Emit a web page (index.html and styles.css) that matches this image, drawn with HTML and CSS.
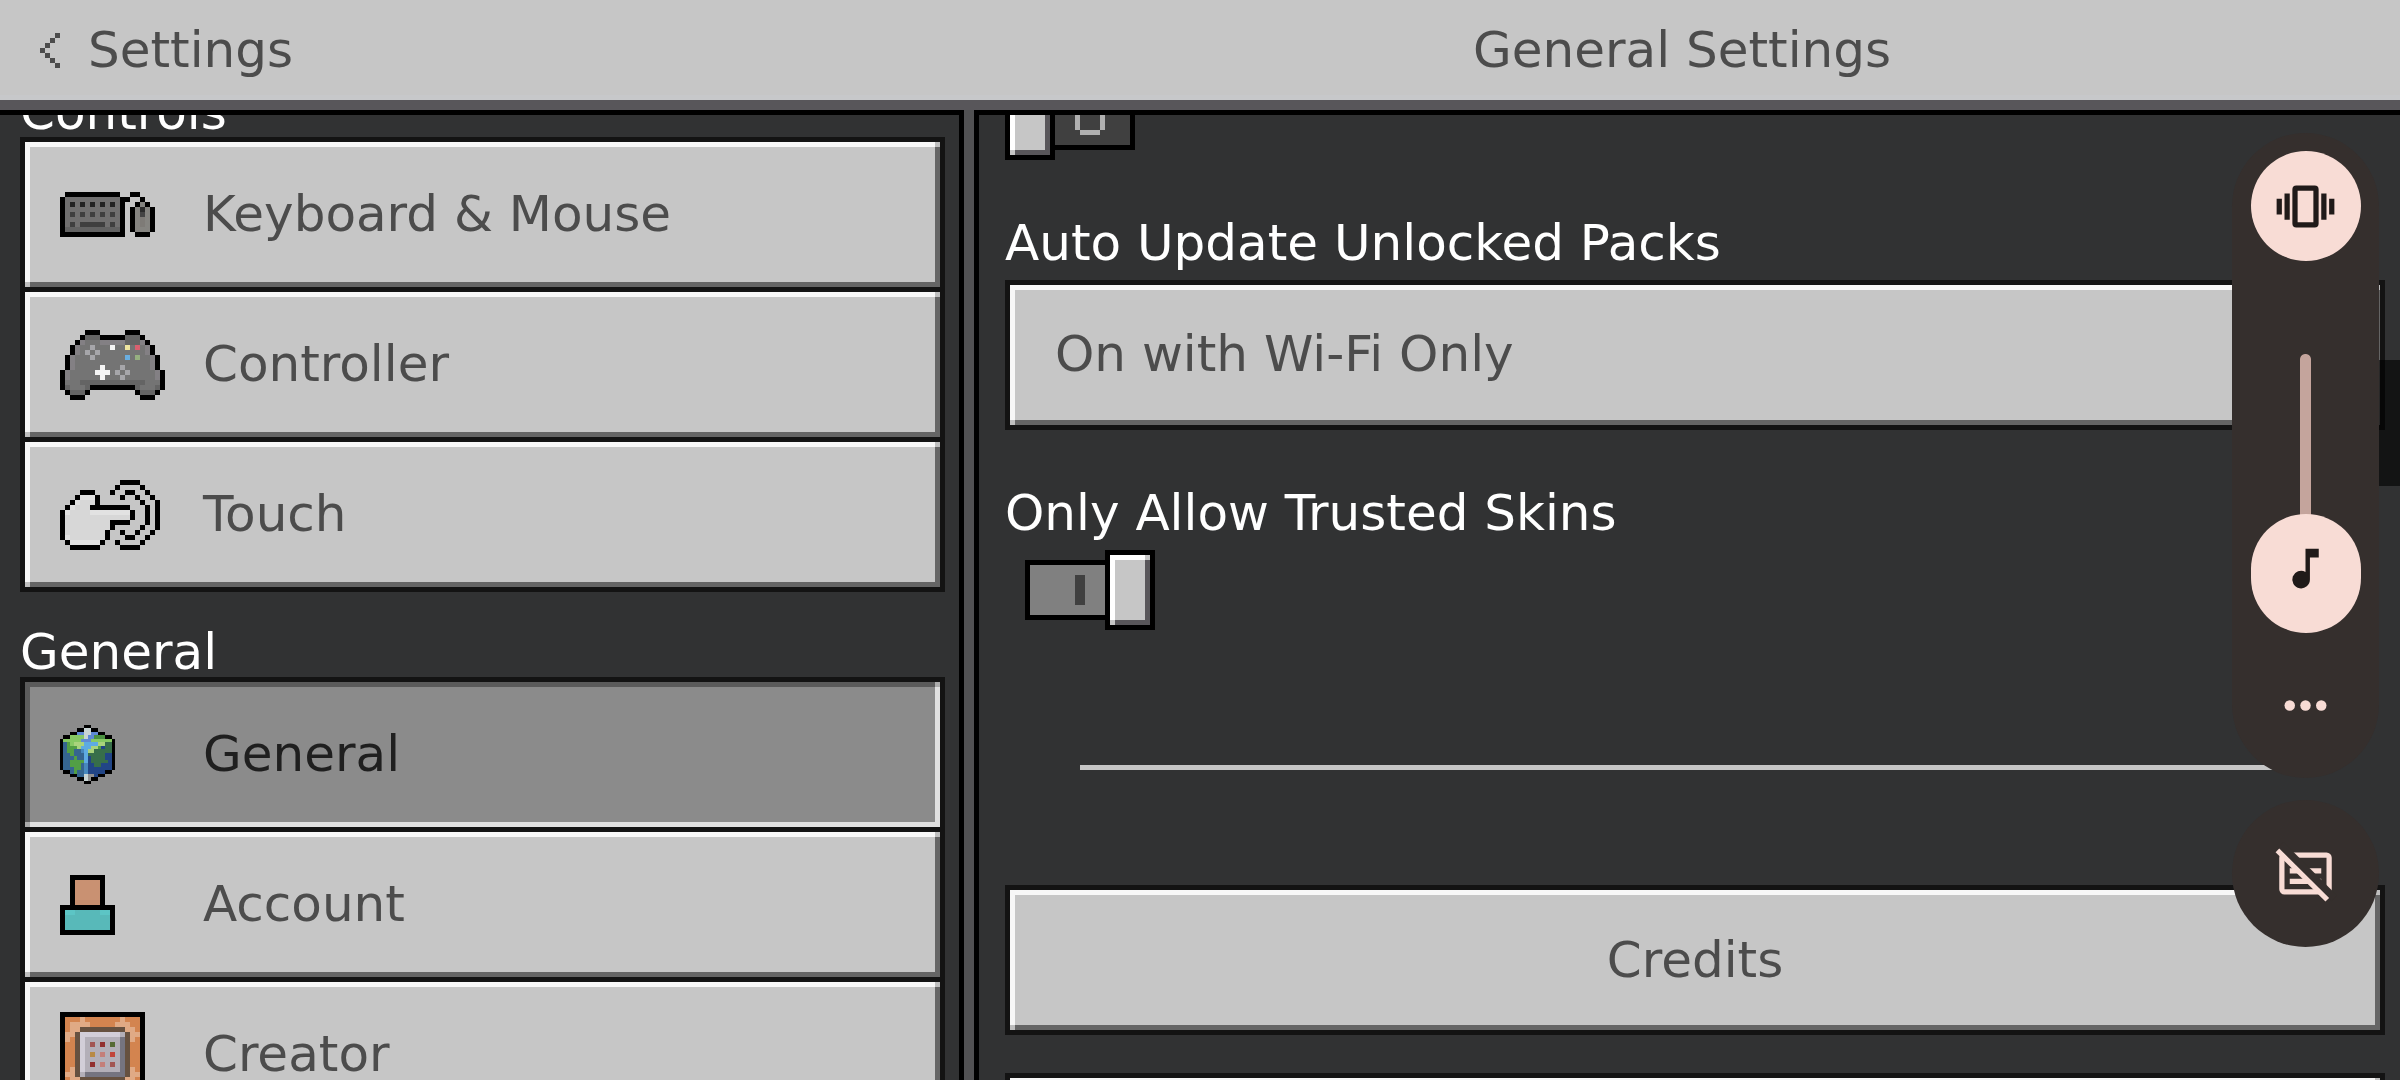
FILE: index.html
```html
<!DOCTYPE html>
<html lang="en">
<head>
<meta charset="utf-8">
<meta name="viewport" content="width=device-width, initial-scale=1">
<title>General Settings</title>
<link rel="stylesheet" href="styles.css">
</head>
<body>
<header class="topbar">
  <button class="back" type="button">
    <svg class="pixel" width="20" height="35" viewBox="0 -0.5 4 7" aria-hidden="true"><path stroke="#4c4c4c" d="M3 0h1M2 1h1M1 2h1M0 3h1M1 4h1M2 5h1M3 6h1"/></svg>
    <span>Settings</span>
  </button>
  <h1 class="title">General Settings</h1>
</header>

<main class="panels">
  <nav class="panel sidebar" aria-label="Settings sections">
    <div class="sections">
      <h2 class="heading">Controls</h2>
      <ul class="menu">
        <li><button class="item bevel" type="button">
          <span class="icon"><svg class="pixel" width="95" height="45" viewBox="0 -0.5 19 9" aria-hidden="true">
            <path stroke="#706f6f" d="M1 1h11M1 2h11M1 3h11M1 4h11M1 5h11M1 6h11"/>
            <path stroke="#626262" d="M1 7h11"/>
            <path stroke="#222" d="M2 2h1M4 2h1M6 2h1M8 2h1M10 2h1"/>
            <path stroke="#3f3f3f" d="M2 4h1M4 4h1M6 4h1M8 4h1M10 4h1M2 6h1M4 6h5M10 6h1"/>
            <path stroke="#858480" d="M16 2h1M15 3h3M15 4h3M15 5h3M15 6h3M15 7h3"/>
            <path stroke="#7e7b77" d="M16 5h1M16 6h1"/>
            <path stroke="#2b2b2b" d="M16 3h1"/><path stroke="#444" d="M16 4h1"/>
            <path stroke="#000" d="M1 0h11M14 0h2M0 1h1M12 1h2M16 1h1M0 2h1M12 2h1M15 2h1M17 2h1M0 3h1M12 3h1M14 3h1M18 3h1M0 4h1M12 4h1M14 4h1M18 4h1M0 5h1M12 5h1M14 5h1M18 5h1M0 6h1M12 6h1M14 6h1M18 6h1M0 7h1M12 7h1M14 7h1M18 7h1M0 8h13M15 8h3"/>
          </svg></span>
          <span>Keyboard &amp; Mouse</span></button></li>
        <li><button class="item bevel" type="button">
          <span class="icon"><svg class="pixel" width="105" height="70" viewBox="0 -0.5 21 14" aria-hidden="true">
            <path stroke="#747474" d="M4 2h13M3 3h15M3 4h15M2 5h17M2 6h17M2 7h17M1 8h19M1 9h19M1 10h19M1 11h5M15 11h5"/>
            <path stroke="#646464" d="M5 1h3M13 1h3M13 2h3M4 10h13M1 11h1M5 11h1M15 11h1M19 11h1M2 12h3M16 12h3"/>
            <path stroke="#838084" d="M4 2h1M8 2h5M16 2h1M3 3h1M17 3h1M3 4h1M17 4h1M2 5h1M18 5h1M2 6h1M18 6h1M2 7h1M18 7h1M1 8h1M19 8h1M1 9h1M19 9h1"/>
            <path stroke="#a6a6aa" d="M6 3h1M5 4h1M7 4h1M6 5h1M12 7h1M11 8h1M13 8h1M12 9h1"/>
            <path stroke="#f5f5f5" d="M10 3h1M8 7h1M7 8h3M8 9h1"/>
            <path stroke="#efe5a0" d="M13 3h1"/><path stroke="#d9606f" d="M15 3h1"/>
            <path stroke="#6aaee0" d="M13 5h1"/><path stroke="#96b080" d="M15 5h1"/>
            <path stroke="#000" d="M5 0h3M13 0h3M4 1h1M8 1h5M16 1h1M3 2h1M17 2h1M2 3h1M18 3h1M2 4h1M18 4h1M1 5h1M19 5h1M1 6h1M19 6h1M1 7h1M19 7h1M0 8h1M20 8h1M0 9h1M20 9h1M0 10h1M20 10h1M0 11h1M6 11h9M20 11h1M1 12h1M5 12h1M15 12h1M19 12h1M2 13h3M16 13h3"/>
          </svg></span>
          <span>Controller</span></button></li>
        <li><button class="item bevel" type="button">
          <span class="icon"><svg class="pixel" width="100" height="70" viewBox="0 -0.5 20 14" aria-hidden="true">
            <path stroke="#d7d7d7" d="M4 3h3M3 4h4M2 5h4M1 6h13M1 7h13M1 8h9M1 9h9M1 10h8M1 11h8M2 12h6"/>
            <path stroke="#e2e2e2" d="M4 3h3M3 4h1M2 5h1M1 6h1M6 6h8M1 11h1M2 12h6"/>
            <path stroke="#000" d="M12 0h4M11 1h1M16 1h1M4 2h3M10 2h1M13 2h2M17 2h1M3 3h1M7 3h1M12 3h1M15 3h1M18 3h1M2 4h1M7 4h1M16 4h1M19 4h1M1 5h1M6 5h8M17 5h1M19 5h1M0 6h1M14 6h1M17 6h1M19 6h1M0 7h1M14 7h1M17 7h1M19 7h1M0 8h1M10 8h4M17 8h1M19 8h1M0 9h1M10 9h1M16 9h1M19 9h1M0 10h1M9 10h1M12 10h1M15 10h1M18 10h1M0 11h1M9 11h1M13 11h2M17 11h1M1 12h1M8 12h1M11 12h1M16 12h1M2 13h6M12 13h4"/>
          </svg></span>
          <span>Touch</span></button></li>
      </ul>

      <h2 class="heading">General</h2>
      <ul class="menu">
        <li><button class="item bevel selected" type="button" aria-current="page">
          <span class="icon"><svg class="pixel" width="55" height="59" viewBox="0 -0.5 16 17" preserveAspectRatio="none" aria-hidden="true">
            <path stroke="#356590" d="M1 5h6M1 6h6M1 7h6M1 8h6M1 9h6M1 10h6M1 11h6M1 12h6M3 13h4M5 14h2"/>
            <path stroke="#214586" d="M8 6h7M8 7h7M8 8h7M8 9h7M8 10h7M8 11h7M8 12h7M8 13h5M9 14h2"/>
            <path stroke="#86c963" d="M3 3h4M1 4h5M9 4h6M3 5h1"/>
            <path stroke="#4b9140" d="M10 3h3"/>
            <path stroke="#5f8ad4" d="M5 2h2M9 2h2M8 3h2M6 4h3"/>
            <path stroke="#c8d4d4" d="M7 1h2M7 2h2M7 3h1M7 14h1M7 15h1"/>
            <path stroke="#909090" d="M8 14h2M8 15h1"/>
            <path stroke="#a9d37c" d="M4 5h3M11 5h2M5 6h1M9 6h2M8 7h2"/>
            <path stroke="#5eabe2" d="M7 5h4M6 6h3M7 7h1M7 8h1M7 9h1M7 10h1"/>
            <path stroke="#4788bd" d="M6 7h1M7 11h1M7 12h1M7 13h1"/>
            <path stroke="#529f45" d="M2 5h1M2 6h3M2 7h2M3 8h1M4 9h1M3 10h4M3 11h3M4 12h2M4 13h1M11 6h1"/>
            <path stroke="#376e4a" d="M13 5h2M13 6h2M10 7h5M8 8h5M14 7h1M9 9h4M9 10h4M10 11h2M13 10h1"/>
            <path stroke="#000" d="M7 0h2M5 1h2M9 1h2M3 2h2M11 2h2M1 3h2M13 3h2M0 4h1M15 4h1M0 5h1M15 5h1M0 6h1M15 6h1M0 7h1M15 7h1M0 8h1M15 8h1M0 9h1M15 9h1M0 10h1M15 10h1M0 11h1M15 11h1M0 12h1M15 12h1M1 13h2M13 13h2M3 14h2M11 14h2M5 15h2M9 15h2M7 16h2"/>
          </svg></span>
          <span>General</span></button></li>
        <li><button class="item bevel" type="button">
          <span class="icon"><svg class="pixel" width="55" height="60" viewBox="0 0 11 12" aria-hidden="true">
            <path fill="#000" d="M2 0h7v6h2v6H0V6h2z"/>
            <path fill="#c99172" d="M3 1h5v5H3z"/><path fill="#c48e6f" d="M3 5h5v1H3z"/>
            <path fill="#000" d="M2 6h7v1H2z"/>
            <path fill="#58b9b9" d="M1 7h9v4H1z"/><path fill="#5cc5c5" d="M1 7h2v1H1zM8 7h2v1H8z"/>
          </svg></span>
          <span>Account</span></button></li>
        <li><button class="item bevel" type="button">
          <span class="icon"><svg class="pixel" width="85" height="85" viewBox="0 0 17 17" aria-hidden="true">
            <path fill="#000" d="M0 0h17v17H0z"/><path fill="#d3844f" d="M1 1h15v15H1z"/>
            <path fill="#e0aa85" d="M4 1h1v1h1v1H4v1H3v1H2v1H1V4h1V2h2zM12 1h1v1h1v1h1v1h1v1h-1v1h-1V4h-1V3h-2V2h1zM2 11h1v2h1v1h1v2H4v-1H2v-2H1v-1h1zM14 11h1v1h1v1h-1v2h-2v1h-1v-2h1v-1h1z"/>
            <path fill="#665140" d="M4 3h9v1h1v9h-1v1H4v-1H3V4h1z"/>
            <path fill="#b3afb8" d="M4 4h9v9H4z"/>
            <path fill="#d2ced8" d="M4 4h8v1H5v7H4z"/>
            <path fill="#757480" d="M12 5h1v8H5v-1h7z"/>
            <path fill="#a25553" d="M6 6h1v1H6zM10 10h1v1h-1z"/>
            <path fill="#923030" d="M8 6h1v1H8zM6 10h1v1H6z"/>
            <path fill="#566a35" d="M10 6h1v1h-1z"/><path fill="#b88a45" d="M6 8h1v1H6z"/>
            <path fill="#c47e79" d="M8 8h1v1H8zM8 10h1v1H8z"/><path fill="#c1443b" d="M10 8h1v1h-1z"/>
          </svg></span>
          <span>Creator</span></button></li>
      </ul>
    </div>
  </nav>

  <div class="divider"></div>

  <section class="panel content" aria-label="General Settings">
    <div class="options">
      <input class="toggle" type="checkbox" aria-label="Option">
      <div class="field">
        <label class="label" for="packs">Auto Update Unlocked Packs</label>
        <select class="box bevel select" id="packs"><option>On with Wi-Fi Only</option></select>
      </div>
      <div class="field">
        <label class="label" for="skins">Only Allow Trusted Skins</label>
        <input class="toggle" type="checkbox" id="skins" checked>
      </div>
      <hr class="rule">
      <div class="actions">
        <button class="box bevel" type="button">Credits</button>
        <button class="box bevel" type="button" aria-label="More"></button>
      </div>
    </div>
  </section>
</main>

<div class="scrollbar"></div>

<aside class="overlay" aria-label="Volume">
  <div class="volume">
    <button class="round" type="button" aria-label="Vibrate">
      <svg width="63" height="63" viewBox="0 0 24 24" fill="#201a19" aria-hidden="true"><path d="M1 9h2v6H1zM4 7h2v10H4zM18 7h2v10h-2zM21 9h2v6h-2z"/><path fill-rule="evenodd" d="M8.500 4h7A1.500 1.500 0 0 1 17 5.500v13a1.500 1.500 0 0 1-1.500 1.500h-7A1.500 1.500 0 0 1 7 18.500v-13A1.500 1.500 0 0 1 8.500 4zM9 6v12h6V6z"/></svg>
    </button>
    <div class="slider">
      <input class="range" type="range" min="0" max="100" value="0" aria-label="Media volume">
      <svg class="note" width="53" height="53" viewBox="0 0 24 24" fill="#201a19" aria-hidden="true"><path d="M12 3v10.550A4 4 0 1 0 14 17V7h4V3z"/></svg>
    </div>
    <button class="more" type="button" aria-label="More">
      <svg width="63" height="63" viewBox="0 0 24 24" fill="#f8dcd5" aria-hidden="true"><circle cx="6" cy="12" r="2"/><circle cx="12" cy="12" r="2"/><circle cx="18" cy="12" r="2"/></svg>
    </button>
  </div>
  <button class="captions" type="button" aria-label="Captions off">
    <svg width="63" height="63" viewBox="0 0 24 24" fill="none" stroke="#f8dcd5" stroke-width="2" aria-hidden="true">
      <rect x="3" y="5" width="18" height="14" rx="1"/>
      <path d="M6 11h12M6 15h12"/>
      <path stroke="#352f2d" stroke-width="3" d="M2.500 1L23 21.500"/>
      <path d="M1.300 3.200L20.300 22"/>
    </svg>
  </button>
</aside>
</body>
</html>
```
FILE: styles.css
```css
* { box-sizing: border-box; }

body {
  margin: 0;
  height: 100vh;
  display: flex;
  flex-direction: column;
  position: relative;
  overflow: hidden;
  background: #58565a;
  color: #4c4c4c;
  font: 50px/50px "DejaVu Sans", sans-serif;
}

button, select {
  margin: 0;
  padding: 0;
  border: 0;
  background: none;
  color: inherit;
  font: inherit;
}

svg { display: block; flex: none; }
.pixel { shape-rendering: crispEdges; }

/* top bar */
.topbar, .panels {
  display: grid;
  grid-template-columns: minmax(0, 964fr) 10px minmax(0, 1426fr);
}
.topbar {
  flex: none;
  height: 100px;
  align-items: center;
  background: #c6c6c6;
  box-shadow: inset 0 -5px #c7c8ca;
}
.back {
  display: flex;
  align-items: center;
  gap: 28px;
  padding-left: 40px;
}
.title {
  grid-column: 2 / 4;
  margin: 0;
  font: inherit;
  text-align: center;
}

/* panels */
.panels {
  flex: 1;
  min-height: 0;
  margin-top: 10px;
}
.panel {
  min-height: 0;
  overflow: hidden;
  background: #313233;
  border-top: 5px solid #000;
}
.divider { background: #515153; }
.sidebar {
  border-right: 5px solid #000;
  padding: 0 14px 0 20px;
}
.content {
  border-left: 5px solid #000;
  padding: 0 15px 0 26px;
}

/* raised edge shared by every large button */
.bevel {
  --face: #c6c6c6;
  --light: #f7f7f7;
  --shade: #656565;
  --corner: #bebebe;
  background:
    linear-gradient(var(--corner), var(--corner)) right top / 5px 5px no-repeat,
    linear-gradient(var(--corner), var(--corner)) left bottom / 5px 5px no-repeat,
    linear-gradient(var(--light), var(--light)) left top / 100% 5px no-repeat,
    linear-gradient(var(--light), var(--light)) left top / 5px 100% no-repeat,
    linear-gradient(var(--shade), var(--shade)) left bottom / 100% 5px no-repeat,
    linear-gradient(var(--shade), var(--shade)) right top / 5px 100% no-repeat,
    var(--face);
}
.selected {
  --face: #8b8b8b;
  --light: #5b5b5b;
  --shade: #e0e0e0;
  --corner: #acacac;
  color: #1f1f1f;
}

/* sidebar: scrolled part of the way down */
.sections { margin-top: -63px; }
.heading {
  margin: 0;
  padding-top: 35px;
  color: #fff;
  font: inherit;
}
.menu {
  margin: 0;
  padding: 5px;
  display: flex;
  flex-direction: column;
  gap: 5px;
  list-style: none;
  background: #131313;
}
.item {
  width: 100%;
  height: 145px;
  padding: 0 0 2px 35px;
  display: flex;
  align-items: center;
  text-align: left;
}
.icon { width: 143px; flex: none; padding-top: 2px; }

/* options: scrolled part of the way down */
.options { margin-top: -35px; }
.field {
  display: flex;
  flex-direction: column;
  gap: 12px;
  margin-top: 58px;
}
.label { color: #fff; }
.box {
  display: block;
  width: 100%;
  height: 150px;
  border: 5px solid #131313;
  background-origin: padding-box;
  background-clip: padding-box;
}
.select {
  appearance: none;
  padding: 0 45px 2px;
  border-radius: 0;
  line-height: 64px;
}
.rule {
  height: 5px;
  margin: 135px 75px 115px;
  border: 0;
  background: #c6c6c6;
}
.actions {
  display: flex;
  flex-direction: column;
  gap: 38px;
}

/* switch */
.toggle {
  appearance: none;
  width: 130px;
  height: 80px;
  margin: 0;
  display: flex;
  align-items: center;
}
.toggle::before {
  content: "";
  box-sizing: border-box;
  flex: 1;
  height: 60px;
  border: 5px solid #000;
  border-left: 0;
  background:
    linear-gradient(#b0b0b0, #b0b0b0) 25px 10px / 20px 5px no-repeat,
    linear-gradient(#b0b0b0, #b0b0b0) 25px 35px / 20px 5px no-repeat,
    linear-gradient(#b0b0b0, #b0b0b0) 20px 15px / 5px 20px no-repeat,
    linear-gradient(#b0b0b0, #b0b0b0) 45px 15px / 5px 20px no-repeat,
    #404040;
}
.toggle::after {
  content: "";
  box-sizing: border-box;
  order: -1;
  width: 50px;
  height: 80px;
  border: 5px solid #000;
  background:
    linear-gradient(#c6c6c6, #c6c6c6) right top / 5px 5px no-repeat,
    linear-gradient(#c6c6c6, #c6c6c6) left bottom / 5px 5px no-repeat,
    linear-gradient(#fff, #fff) left top / 100% 5px no-repeat,
    linear-gradient(#fff, #fff) left top / 5px 100% no-repeat,
    linear-gradient(#58565a, #58565a) left bottom / 100% 5px no-repeat,
    linear-gradient(#58565a, #58565a) right top / 5px 100% no-repeat,
    #c6c6c6;
}
.toggle:checked { margin-left: 20px; }
.toggle:checked::before {
  border: 5px solid #000;
  border-right: 0;
  background: linear-gradient(#404040, #404040) 45px 10px / 10px 30px no-repeat, #808080;
}
.toggle:checked::after { order: 1; }

.scrollbar {
  position: absolute;
  top: 360px;
  right: 0;
  width: 25px;
  height: 126px;
  background: rgba(0, 0, 0, 0.6);
}

/* volume overlay floating over the page */
.overlay {
  position: absolute;
  top: 133px;
  right: 21px;
  width: 147px;
  display: flex;
  flex-direction: column;
  gap: 22px;
}
.volume {
  display: flex;
  flex-direction: column;
  align-items: center;
  padding-top: 18px;
  border-radius: 74px;
  background: #352f2d;
}
.round {
  width: 110px;
  height: 110px;
  display: grid;
  place-items: center;
  border-radius: 50%;
  background: #f8dcd5;
}
.slider {
  position: relative;
  width: 110px;
  height: 279px;
  margin-top: 93px;
}
.range {
  appearance: none;
  display: block;
  width: 110px;
  height: 279px;
  margin: 0;
  writing-mode: vertical-lr;
  direction: rtl;
  background:
    radial-gradient(circle at center, #c4a49c 5px, transparent 6px) center top / 11px 11px no-repeat,
    linear-gradient(#c4a49c, #c4a49c) center 5px / 11px 200px no-repeat;
}
.range::-webkit-slider-thumb {
  appearance: none;
  width: 110px;
  height: 119px;
  border: 0;
  border-radius: 55px;
  background: #f8dcd5;
}
.note {
  position: absolute;
  left: 28px;
  bottom: 38px;
  pointer-events: none;
}
.more {
  width: 110px;
  height: 145px;
  display: grid;
  place-items: center;
}
.captions {
  width: 147px;
  height: 147px;
  display: grid;
  place-items: center;
  border-radius: 50%;
  background: #352f2d;
}
```
